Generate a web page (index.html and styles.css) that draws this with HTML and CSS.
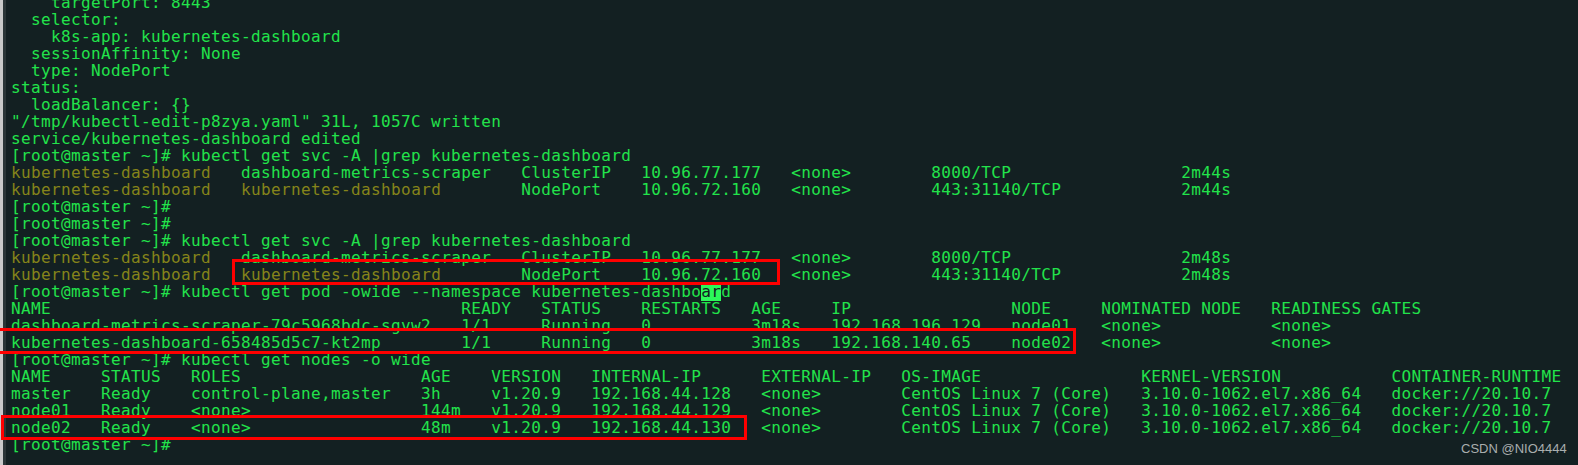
FILE: index.html
```html
<!DOCTYPE html>
<html>
<head>
<meta charset="utf-8">
<title>terminal</title>
<link rel="stylesheet" href="styles.css">
</head>
<body>
<div class="window">
  <div class="edge"><div class="edge-light"></div><div class="edge-dark"></div></div>
  <pre class="term">    targetPort: 8443
  selector:
    k8s-app: kubernetes-dashboard
  sessionAffinity: None
  type: NodePort
status:
  loadBalancer: {}
"/tmp/kubectl-edit-p8zya.yaml" 31L, 1057C written
service/kubernetes-dashboard edited
[root@master ~]# kubectl get svc -A |grep kubernetes-dashboard
<span class="hl">kubernetes-dashboard</span>   dashboard-metrics-scraper   ClusterIP   10.96.77.177   &lt;none&gt;        8000/TCP                 2m44s
<span class="hl">kubernetes-dashboard</span>   <span class="hl">kubernetes-dashboard</span>        NodePort    10.96.72.160   &lt;none&gt;        443:31140/TCP            2m44s
[root@master ~]#
[root@master ~]#
[root@master ~]# kubectl get svc -A |grep kubernetes-dashboard
<span class="hl">kubernetes-dashboard</span>   dashboard-metrics-scraper   ClusterIP   10.96.77.177   &lt;none&gt;        8000/TCP                 2m48s
<span class="hl">kubernetes-dashboard</span>   <span class="hl">kubernetes-dashboard</span>        NodePort    10.96.72.160   &lt;none&gt;        443:31140/TCP            2m48s
[root@master ~]# kubectl get pod -owide --namespace kubernetes-dashbo<span class="cursor">ar</span>d
NAME                                         READY   STATUS    RESTARTS   AGE     IP                NODE     NOMINATED NODE   READINESS GATES
dashboard-metrics-scraper-79c5968bdc-sgvw2   1/1     Running   0          3m18s   192.168.196.129   node01   &lt;none&gt;           &lt;none&gt;
kubernetes-dashboard-658485d5c7-kt2mp        1/1     Running   0          3m18s   192.168.140.65    node02   &lt;none&gt;           &lt;none&gt;
[root@master ~]# kubectl get nodes -o wide
NAME     STATUS   ROLES                  AGE    VERSION   INTERNAL-IP      EXTERNAL-IP   OS-IMAGE                KERNEL-VERSION           CONTAINER-RUNTIME
master   Ready    control-plane,master   3h     v1.20.9   192.168.44.128   &lt;none&gt;        CentOS Linux 7 (Core)   3.10.0-1062.el7.x86_64   docker://20.10.7
node01   Ready    &lt;none&gt;                 144m   v1.20.9   192.168.44.129   &lt;none&gt;        CentOS Linux 7 (Core)   3.10.0-1062.el7.x86_64   docker://20.10.7
node02   Ready    &lt;none&gt;                 48m    v1.20.9   192.168.44.130   &lt;none&gt;        CentOS Linux 7 (Core)   3.10.0-1062.el7.x86_64   docker://20.10.7
[root@master ~]#</pre>
  <div class="mark mark-svc"></div>
  <div class="mark mark-pod"></div>
  <div class="mark mark-node"></div>
  <div class="watermark">CSDN @NIO4444</div>
</div>
</body>
</html>
```
FILE: styles.css
```css
html, body {
  margin: 0;
  padding: 0;
  background: #132022;
}
.window {
  position: relative;
  display: flex;
  width: 1578px;
  height: 465px;
  overflow: hidden;
  background: #132022;
}
.edge {
  display: flex;
  flex: none;
}
.edge-light {
  width: 3px;
  background: #c9c9c9;
}
.edge-dark {
  width: 3px;
  background: #2a3537;
}
.term {
  margin: -6px 0 0 5px;
  padding: 0;
  font-family: "DejaVu Sans Mono", monospace;
  font-size: 16px;
  letter-spacing: 0.37px;
  line-height: 17px;
  color: #22e34b;
  white-space: pre;
}
.hl {
  color: #85841a;
}
.cursor {
  background: #2cf85a;
  color: #132022;
}
.mark {
  position: absolute;
  box-sizing: border-box;
  border: 3px solid #ff0000;
}
.mark-svc {
  left: 232px;
  top: 259px;
  width: 548px;
  height: 26px;
}
.mark-pod {
  left: -4px;
  top: 328px;
  width: 1080px;
  height: 26px;
}
.mark-node {
  left: 1px;
  top: 415px;
  width: 746px;
  height: 25px;
}
.watermark {
  position: absolute;
  left: 1461px;
  top: 441px;
  font-family: "Liberation Sans", Arial, sans-serif;
  font-size: 13px;
  color: #a9aeae;
}
```
